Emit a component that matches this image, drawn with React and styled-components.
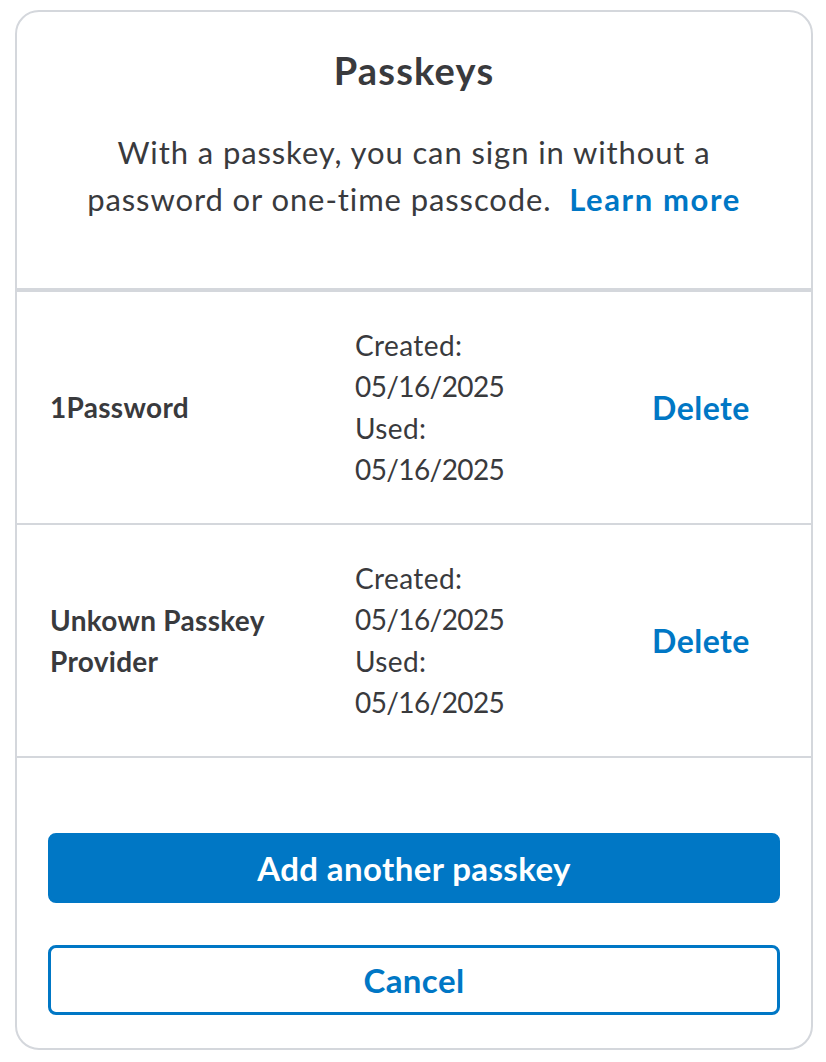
import React from 'react'
import styled, { createGlobalStyle } from 'styled-components'

const passkeys = [
  { id: 1, name: '1Password', created: '05/16/2025', used: '05/16/2025' },
  { id: 2, name: 'Unkown Passkey Provider', created: '05/16/2025', used: '05/16/2025' }
]

export default () =>
  <>
    <GlobalStyle />
    <StyledCard>
      <StyledHeader>
        <StyledTitle>Passkeys</StyledTitle>
        <StyledIntro>
          With a passkey, you can sign in without a password or one-time passcode.{'\u00a0 '}
          <StyledLink href="#">Learn more</StyledLink>
        </StyledIntro>
      </StyledHeader>
      <StyledList>
        {passkeys.map(key =>
          <StyledRow key={key.id}>
            <StyledName>{key.name}</StyledName>
            <StyledDates>
              <span>Created:</span>
              <StyledDate>{key.created}</StyledDate>
              <span>Used:</span>
              <StyledDate>{key.used}</StyledDate>
            </StyledDates>
            <StyledDelete type="button">Delete</StyledDelete>
          </StyledRow>
        )}
      </StyledList>
      <StyledActions>
        <StyledButton type="button" primary>Add another passkey</StyledButton>
        <StyledButton type="button">Cancel</StyledButton>
      </StyledActions>
    </StyledCard>
  </>

const GlobalStyle = createGlobalStyle`
  body {
    margin: 0;
    background: #fff;
    font-family: Lato, "Open Sans", sans-serif;
    color: #393a3d;
  }
`

const StyledCard = styled.main`
  box-sizing: border-box;
  width: 798px;
  height: 1040px;
  margin: 10px 0 0 15px;
  border: 2px solid #d4d7dc;
  border-radius: 24px;
  display: flex;
  flex-direction: column;
`

const StyledHeader = styled.header`
  padding: 35px 40px 0;
  height: 280px;
  box-sizing: border-box;
  border-bottom: 4px solid #d4d7dc;
  text-align: center;
`

const StyledTitle = styled.h1`
  margin: 0;
  font-size: 38px;
  line-height: 46px;
  font-weight: 700;
  letter-spacing: 1.2px;
`

const StyledIntro = styled.p`
  margin: 36px auto 0;
  max-width: 700px;
  font-size: 31px;
  line-height: 47px;
  letter-spacing: 0.9px;
`

const StyledLink = styled.a`
  color: #0077c5;
  font-weight: 700;
  letter-spacing: 1.6px;
  text-decoration: none;
`

const StyledList = styled.section`
  display: flex;
  flex-direction: column;
`

const StyledRow = styled.div`
  display: grid;
  grid-template-columns: 305px 297px auto;
  align-items: center;
  height: 233px;
  box-sizing: border-box;
  padding: 0 33px;
  border-bottom: 2px solid #d4d7dc;
`

const StyledName = styled.span`
  max-width: 240px;
  font-size: 28px;
  line-height: 41px;
  font-weight: 700;
  letter-spacing: 0.3px;
`

const StyledDates = styled.div`
  display: flex;
  flex-direction: column;
  font-size: 28px;
  line-height: 41.3px;
  letter-spacing: 0.4px;
`

const StyledDate = styled.span`
  letter-spacing: -0.6px;
`

const StyledDelete = styled.button`
  justify-self: start;
  border: none;
  background: transparent;
  padding: 0;
  font-family: inherit;
  font-size: 32px;
  font-weight: 700;
  color: #0077c5;
  letter-spacing: 0.5px;
  cursor: pointer;
`

const StyledActions = styled.footer`
  display: flex;
  flex-direction: column;
  gap: 42px;
  padding: 75px 31px 0;
`

const StyledButton = styled.button`
  height: 70px;
  border-radius: 8px;
  border: 3px solid #0077c5;
  background: ${({ primary }) => primary ? '#0077c5' : '#fff'};
  color: ${({ primary }) => primary ? '#fff' : '#0077c5'};
  font-family: inherit;
  font-size: 33px;
  font-weight: 700;
  letter-spacing: 0.4px;
  cursor: pointer;
`
